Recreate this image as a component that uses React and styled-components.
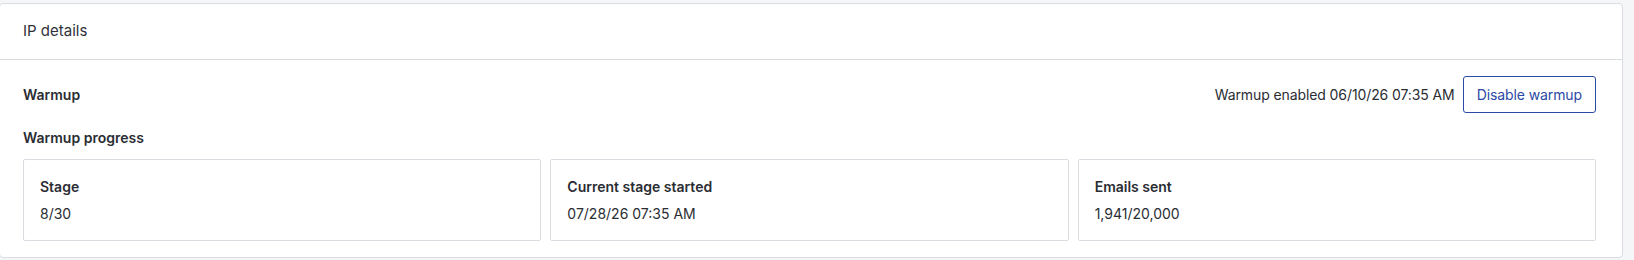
import React from 'react'
import styled, { createGlobalStyle } from 'styled-components'

const GlobalStyle = createGlobalStyle`
  body {
    margin: 0;
    background: #f5f6f8;
    font-family: Inter, "Liberation Sans", sans-serif;
    color: #2a2d33;
  }
`

const Page = styled.div`
  padding: 3px 11px 0 0;
`

const Card = styled.div`
  margin-left: -1px;
  background: #fff;
  border: 1px solid #d9dde2;
  border-radius: 4px;
`

const Header = styled.div`
  padding: 17px 23px 18px;
  border-bottom: 1px solid #d9dde2;
  font-size: 15px;
  line-height: 20px;
  color: #2f3238;
`

const Body = styled.div`
  padding: 16px 26px 16px 23px;
`

const Row = styled.div`
  display: flex;
  align-items: center;
  justify-content: space-between;
  height: 37px;
`

const Title = styled.span`
  font-size: 14px;
  font-weight: 600;
  line-height: 20px;
  color: #2a2d33;
`

const Status = styled.div`
  display: flex;
  align-items: center;
  gap: 8px;
  font-size: 14px;
  letter-spacing: -0.1px;
  color: #2a2d33;
`

const Button = styled.button`
  height: 37px;
  padding: 0 13px;
  background: #fff;
  border: 1px solid #2b4aa5;
  border-radius: 3px;
  color: #2b4aa5;
  font-family: inherit;
  font-size: 14px;
  letter-spacing: -0.1px;
  cursor: pointer;
`

const Progress = styled.div`
  margin-top: 15px;
  display: flex;
  flex-direction: column;
  gap: 11px;
`

const Grid = styled.div`
  display: grid;
  grid-template-columns: repeat(3, 1fr);
  gap: 9px;
`

const Stat = styled.div`
  display: flex;
  flex-direction: column;
  gap: 7px;
  padding: 17px 16px 16px;
  border: 1px solid #d9dde2;
  border-radius: 2px;
`

const Value = styled.span`
  font-size: 14px;
  line-height: 20px;
  color: #2a2d33;
`

const stats = [
  { label: 'Stage', value: '8/30' },
  { label: 'Current stage started', value: '07/28/26 07:35 AM' },
  { label: 'Emails sent', value: '1,941/20,000' },
]

const App = () => {
  return (
    <Page>
      <GlobalStyle />
      <Card>
        <Header>IP details</Header>
        <Body>
          <Row>
            <Title>Warmup</Title>
            <Status>
              Warmup enabled 06/10/26 07:35 AM
              <Button>Disable warmup</Button>
            </Status>
          </Row>
          <Progress>
            <Title>Warmup progress</Title>
            <Grid>
              {stats.map((s) => (
                <Stat key={s.label}>
                  <Title>{s.label}</Title>
                  <Value>{s.value}</Value>
                </Stat>
              ))}
            </Grid>
          </Progress>
        </Body>
      </Card>
    </Page>
  )
}

export default App
